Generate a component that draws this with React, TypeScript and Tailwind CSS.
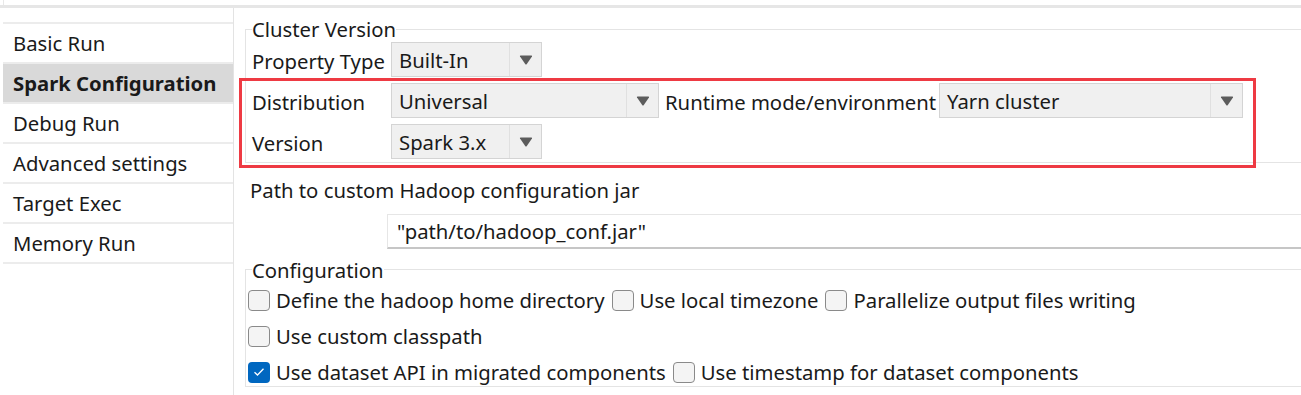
import type { ReactNode } from "react";

const navItems = [
  "Basic Run",
  "Spark Configuration",
  "Debug Run",
  "Advanced settings",
  "Target Exec",
  "Memory Run",
];

function Combo({ value, width }: { value: string; width: string }) {
  return (
    <div
      className={`flex h-[35px] shrink-0 items-center border border-[#d4d4d4] bg-[#f0f0f0] ${width}`}
    >
      <span className="flex-1 truncate pl-[7px] pt-[1px]">{value}</span>
      <div className="flex h-full w-[32px] items-center justify-center border-l border-[#e0e0e0]">
        <svg width="14" height="10" viewBox="0 0 14 10">
          <path d="M1 1.5 Q0.5 0.5 1.8 0.5 H12.2 Q13.5 0.5 13 1.5 L7.8 9 Q7 10 6.2 9 Z" fill="#5c5c5c" />
        </svg>
      </div>
    </div>
  );
}

function Check({ checked = false, label }: { checked?: boolean; label: string }) {
  return (
    <div className="flex items-center gap-[6px]">
      {checked ? (
        <span className="flex h-[21px] w-[22px] items-center justify-center rounded-[4px] bg-[#0067c0]">
          <svg width="12" height="10" viewBox="0 0 12 10">
            <path d="M1.5 5.2 L4.5 8 L10.5 1.8" fill="none" stroke="#ffffff" strokeWidth="1.3" />
          </svg>
        </span>
      ) : (
        <span className="h-[21px] w-[22px] rounded-[4px] border border-[#8a8a8a] bg-[#f4f4f4]" />
      )}
      <span className="whitespace-nowrap">{label}</span>
    </div>
  );
}

function Group({
  title,
  children,
  className,
  legendClass,
}: {
  title: string;
  children: ReactNode;
  className: string;
  legendClass: string;
}) {
  return (
    <fieldset className={`w-[1100px] border border-[#e4e4e4] ${className}`}>
      <legend className={`leading-[20px] ${legendClass}`}>{title}</legend>
      {children}
    </fieldset>
  );
}

export default function App() {
  return (
    <div
      className="relative h-[395px] w-[1301px] overflow-hidden bg-white text-[20.3px] leading-[26px] text-[#1a1a1a]"
      style={{ fontFamily: '"Noto Sans", "Open Sans", sans-serif' }}
    >
      <div className="ml-[3px] h-[5px] border-l border-[#e8e8e8]" />
      <div className="h-[3px] bg-[#e6e6e6]" />
      <div className="flex h-[387px]">
        {/* left nav */}
        <div className="w-[234px] shrink-0 border-r border-[#e3e3e3] pl-[3px] pt-[14px]">
          <div className="border-t-2 border-[#ececec]">
            {navItems.map((item) => (
              <div
                key={item}
                className={`flex h-[40px] items-center whitespace-nowrap border-b-2 border-[#ececec] pl-[10px] ${
                  item === "Spark Configuration" ? "bg-[#d9d9d9] font-bold" : ""
                }`}
              >
                {item}
              </div>
            ))}
          </div>
        </div>

        {/* right panel */}
        <div className="min-w-0 flex-1 overflow-hidden pl-[11px]">
          <Group
            title="Cluster Version"
            className="mt-[11px] h-[144px] pl-[6px]"
            legendClass="ml-0"
          >
            <div className="mt-[3px] flex items-center">
              <span className="w-[139px] shrink-0 pt-[3px]">Property Type</span>
              <Combo value="Built-In" width="w-[151px]" />
            </div>
            <div className="mt-[6px] flex items-center">
              <span className="w-[139px] shrink-0 pt-[3px]">Distribution</span>
              <Combo value="Universal" width="w-[268px]" />
              <span className="ml-[6px] w-[274px] shrink-0 whitespace-nowrap pt-[2px]">
                Runtime mode/environment
              </span>
              <Combo value="Yarn cluster" width="w-[304px]" />
            </div>
            <div className="mt-[6px] flex items-center">
              <span className="w-[139px] shrink-0 pt-[3px]">Version</span>
              <Combo value="Spark 3.x" width="w-[151px]" />
            </div>
          </Group>

          <div className="mt-[14px] pl-[5px]">Path to custom Hadoop configuration jar</div>
          <div className="ml-[142px] mt-[11px] flex h-[35px] w-[1000px] items-center border-l border-t border-b-2 border-l-[#e6e6e6] border-t-[#e6e6e6] border-b-[#c6c6c6] pl-[9px]">
            "path/to/hadoop_conf.jar"
          </div>

          <Group
            title="Configuration"
            className="mt-[9px] h-[129px] pl-[2px]"
            legendClass="ml-[4px] pt-[2px]"
          >
            <div className="pt-[2px]">
              <div className="flex h-[36px] items-center gap-[7px]">
                <Check label="Define the hadoop home directory" />
                <Check label="Use local timezone" />
                <Check label="Parallelize output files writing" />
              </div>
              <div className="flex h-[36px] items-center">
                <Check label="Use custom classpath" />
              </div>
              <div className="flex h-[36px] items-center gap-[7px]">
                <Check checked label="Use dataset API in migrated components" />
                <Check label="Use timestamp for dataset components" />
              </div>
            </div>
          </Group>
        </div>
      </div>

      {/* annotation box */}
      <div className="pointer-events-none absolute left-[239px] top-[78px] h-[90px] w-[1017px] border-[3px] border-[#ee3a43]" />
    </div>
  );
}
